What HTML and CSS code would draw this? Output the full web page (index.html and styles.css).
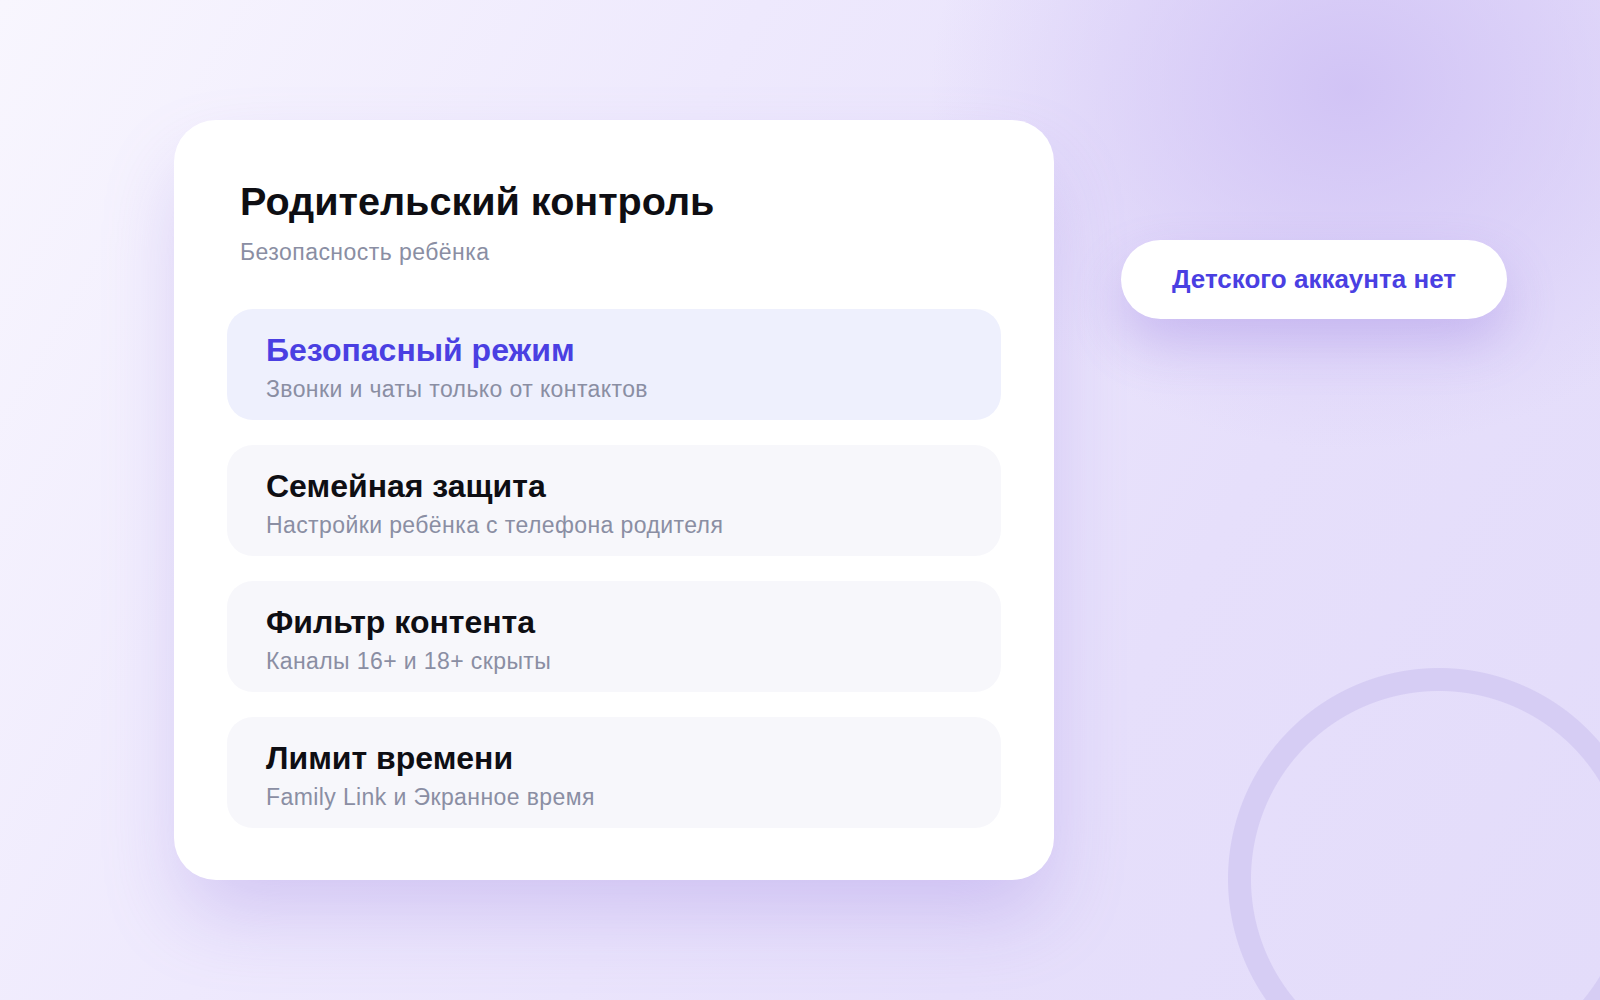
FILE: index.html
```html
<!DOCTYPE html>
<html lang="ru">
<head>
<meta charset="utf-8">
<title>Родительский контроль</title>
<link rel="stylesheet" href="styles.css">
</head>
<body>
<main class="stage">
  <section class="card">
    <header class="card-head">
      <h1 class="card-title">Родительский контроль</h1>
      <p class="card-sub">Безопасность ребёнка</p>
    </header>
    <ul class="list">
      <li class="item item-active">
        <div class="item-title">Безопасный режим</div>
        <div class="item-sub">Звонки и чаты только от контактов</div>
      </li>
      <li class="item">
        <div class="item-title">Семейная защита</div>
        <div class="item-sub">Настройки ребёнка с телефона родителя</div>
      </li>
      <li class="item">
        <div class="item-title">Фильтр контента</div>
        <div class="item-sub">Каналы 16+ и 18+ скрыты</div>
      </li>
      <li class="item">
        <div class="item-title">Лимит времени</div>
        <div class="item-sub">Family Link и Экранное время</div>
      </li>
    </ul>
  </section>
  <div class="pill">Детского аккаунта нет</div>
</main>
</body>
</html>
```

FILE: styles.css
```css
* { box-sizing: border-box; }
html, body { margin: 0; padding: 0; }
body {
  width: 1600px;
  height: 1000px;
  overflow: hidden;
  font-family: "Liberation Sans", Arial, sans-serif;
  background:
    radial-gradient(circle at 1439px 879px, rgba(214,205,244,0) 187.5px, #d6cdf4 188.5px, #d6cdf4 210.5px, rgba(214,205,244,0) 211.5px),
    radial-gradient(ellipse 420px 360px at 1350px 90px, rgba(208,194,245,0.95) 0%, rgba(208,194,245,0) 100%),
    linear-gradient(120deg, #f8f6fe 0%, #eee9fd 35%, #e6dffb 70%, #e3dcfa 100%);
}
.stage {
  display: flex;
  align-items: flex-start;
  gap: 67px;
  padding: 120px 0 0 174px;
}
.card {
  width: 880px;
  height: 760px;
  background: #ffffff;
  border-radius: 42px;
  padding: 58px 53px 0 53px;
  box-shadow: 0 40px 80px -10px rgba(150, 120, 225, 0.32);
}
.card-head { padding-left: 13px; }
.card-title {
  margin: 0;
  font-size: 39.6px;
  line-height: 46px;
  font-weight: 700;
  color: #0e0e13;
}
.card-sub {
  margin: 14px 0 0 0;
  font-size: 23px;
  line-height: 28px;
  letter-spacing: 0.45px;
  color: #8a8ea3;
}
.list {
  list-style: none;
  margin: 43px 0 0 0;
  padding: 0;
  display: flex;
  flex-direction: column;
  gap: 25px;
}
.item {
  height: 111px;
  border-radius: 26px;
  background: #f7f7fb;
  padding: 22px 40px 0 39px;
}
.item-active { background: #eef0fd; }
.item-title {
  font-size: 32px;
  line-height: 38px;
  font-weight: 700;
  color: #0e0e13;
}
.item-active .item-title { color: #4a3fe2; }
.item-sub {
  margin-top: 6px;
  font-size: 23px;
  line-height: 28px;
  letter-spacing: 0.4px;
  color: #8a8ea3;
}
.pill {
  margin-top: 120px;
  width: 386px;
  height: 79px;
  border-radius: 40px;
  background: #ffffff;
  display: flex;
  align-items: center;
  justify-content: center;
  font-size: 26px;
  font-weight: 700;
  color: #4a3fe2;
  box-shadow: 0 24px 50px rgba(150, 120, 225, 0.32);
}
```
